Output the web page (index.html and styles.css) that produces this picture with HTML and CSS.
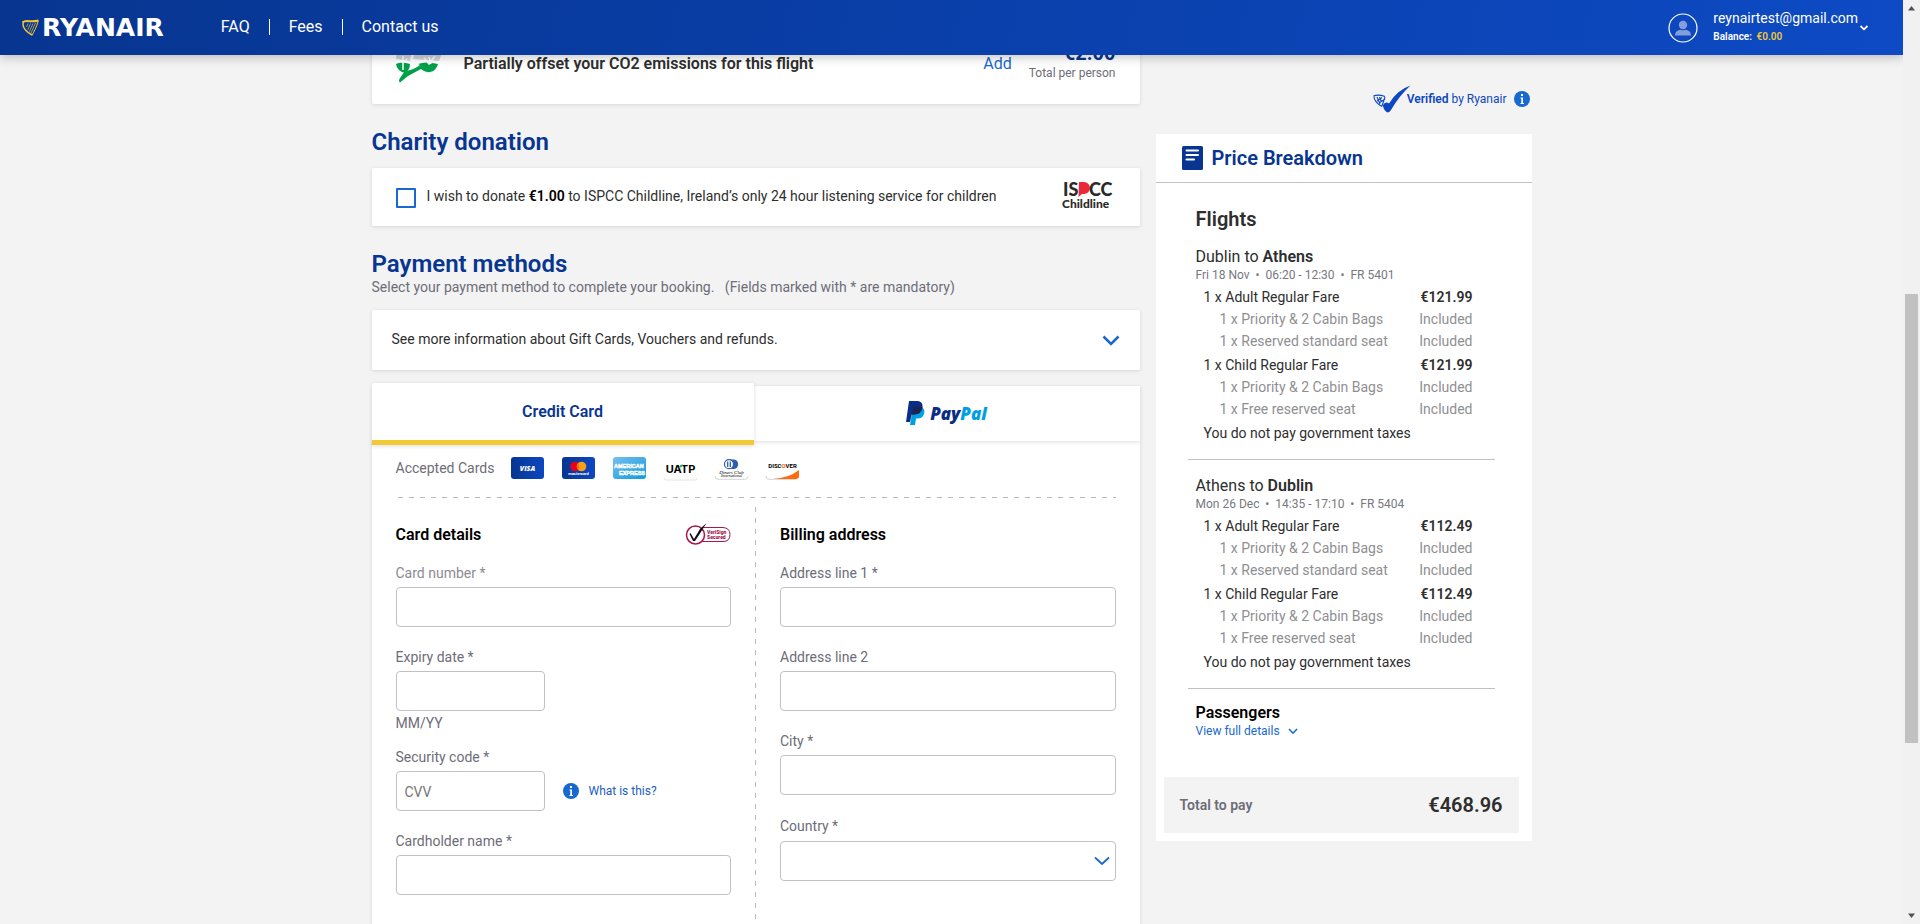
FILE: index.html
```html
<!DOCTYPE html>
<html lang="en">
<head>
<meta charset="utf-8">
<title>Ryanair – Payment</title>
<link rel="stylesheet" href="styles.css">
</head>
<body>
<div class="page">
  <header class="topbar">
    <a class="logo" href="#" aria-label="Ryanair">
      <svg class="logo-harp" viewBox="0 0 18 18" fill="none" stroke="#f1c933"><path d="M0.5 3.5C4 0 8 4 16.5 1.5" stroke-width="2"/><path d="M1.500 3C0 7 3 12 10 16" stroke-width="1.500"/><path d="M16 2C15 8 12 12 10 16.500" stroke-width="1"/><path d="M6 4.500L4.500 8M8.500 4.500L6 10.500M11 4.500L7.500 12.500M13.500 4L9 14" stroke-width=".7"/></svg>
      <span>RYANAIR</span>
    </a>
    <nav class="nav">
      <a href="#">FAQ</a><a href="#">Fees</a><a href="#">Contact us</a>
    </nav>
    <button class="account" type="button">
      <svg class="avatar" viewBox="0 0 30 30"><circle cx="15" cy="15" r="14" fill="none" stroke="#fff" stroke-width="1.200"/><circle cx="15" cy="12" r="4.200" fill="#859edb"/><path d="M7 22.500C7 18.500 10 17 12.500 16.700Q15 18 17.500 16.700C20 17 23 18.500 23 22.500Z" fill="#859edb"/></svg>
      <span class="account-text">
        <span class="email">reynairtest@gmail.com</span>
        <span class="balance">Balance: <b>€0.00</b></span>
      </span>
      <svg class="account-chev" viewBox="0 0 10 6"><path d="M1.500 1L5 4.300L8.500 1" fill="none" stroke="#fff" stroke-width="1.800"/></svg>
    </button>
  </header>

  <div class="layout">
    <main class="content">
      <section class="card offset">
        <svg class="leaf" viewBox="0 0 46 44"><path d="M0 20Q1 2 14 0Q17 10 14 22Z" fill="#d3d5d8"/><path d="M17 20Q20 2 32 0Q45 6 46 14L43 22Z" fill="#d3d5d8"/><path d="M0 25Q5 22 14 25Q14 31 9 34Q1 32 0 25Z" fill="#00a04a"/><path d="M22 25Q30 22 42 25Q40 32 34 33Q29 34 25 30L12 37L4 43.500Q2 42 4 39L9 32Q18 31 24 26Z" fill="#00a04a"/><path d="M7 17V31M7 24L3 21M7 24L11 20M28 19L33 25L39 17M33 18L35 25" stroke="#fff" stroke-width="1.500" fill="none"/></svg>
        <h3 class="offset-title">Partially offset your CO2 emissions for this flight</h3>
        <button class="add" type="button">Add</button>
        <div class="offset-price"><b>€2.00</b><span>Total per person</span></div>
      </section>

      <h2>Charity donation</h2>
      <section class="card charity">
        <input type="checkbox" id="donate">
        <label for="donate">I wish to donate <b>€1.00</b> to ISPCC Childline, Ireland’s only 24 hour listening service for children</label>
        <svg class="ispcc" viewBox="0 0 52 40" role="img" aria-label="ISPCC Childline"><path d="M17 5H22A5.500 5.500 0 0 1 22 17H20L16.500 20Z" fill="#ea2839"/><g class="ispcc-text"><text x="1" y="19" font-size="18">IS</text><text x="27" y="19" font-size="18">CC</text><text x="0" y="31" font-size="12">Childline</text></g></svg>
      </section>

      <h2>Payment methods</h2>
      <p class="hint">Select your payment method to complete your booking. &nbsp; (Fields marked with * are mandatory)</p>
      <button class="card vouchers" type="button">
        <span>See more information about Gift Cards, Vouchers and refunds.</span>
        <svg class="chev-lg" viewBox="0 0 18 12"><path d="M1.500 1.500L9 9L16.500 1.500" fill="none" stroke="#1769cf" stroke-width="2.500"/></svg>
      </button>

      <div class="tabs">
        <button class="tab tab-active" type="button">Credit Card</button>
        <button class="tab tab-paypal" type="button" aria-label="PayPal">
          <svg class="pp-mark" viewBox="0 0 20 24"><path d="M7 6H15.500Q19.500 8 18 13Q16.500 17.500 11.500 17.500H10L9 24H4Z" fill="#009ee3"/><path d="M3 0H11.500Q17 .5 16.500 6Q15.500 13.500 8 13.500H5.700L4 21H0Z" fill="#0b2d86"/><path d="M7.500 6H16.500Q15.500 13.500 8 13.500H6Z" fill="#1c2450"/></svg>
          <span class="pp-text">Pay<i>Pal</i></span>
        </button>
      </div>

      <section class="panel">
        <div class="accepted">
          <span>Accepted Cards</span>
          <div class="brands">
            <svg viewBox="0 0 35 24"><defs><linearGradient id="bl"><stop stop-color="#073590"/><stop offset="1" stop-color="#0d47c1"/></linearGradient></defs><rect x="1" y="1" width="33" height="22" rx="3" fill="url(#bl)"/><text x="17.500" y="14.500" text-anchor="middle" class="b-italic" font-size="7" fill="#fff">VISA</text></svg>
            <svg viewBox="0 0 35 24"><rect x="1" y="1" width="33" height="22" rx="3" fill="url(#bl)"/><circle cx="14" cy="10.500" r="4.800" fill="#eb001b"/><circle cx="20.500" cy="10.500" r="4.800" fill="#f79e1b"/><path d="M17.250 7Q19 10.500 17.250 14Q15.500 10.500 17.250 7Z" fill="#ff5f00"/><text x="17.500" y="19" text-anchor="middle" class="b-bold" font-size="4" fill="#fff">mastercard</text></svg>
            <svg viewBox="0 0 35 24"><defs><linearGradient id="am" x2="1" y2="1"><stop stop-color="#77bfec"/><stop offset="1" stop-color="#0f9bdb"/></linearGradient></defs><rect x="1" y="1" width="33" height="22" rx="3" fill="url(#am)"/><text x="2" y="12" class="b-amex" font-size="5.500">AMERICAN</text><text x="7" y="19" class="b-amex" font-size="5.500">EXPRESS</text></svg>
            <svg viewBox="0 0 35 24"><path d="M1 22Q1 24 3 24H32Q34 24 34 22" fill="none" stroke="#dcdcdc" stroke-width=".8"/><text x="17.500" y="17" text-anchor="middle" class="b-wide" font-size="11">UATP</text><path d="M16 12L20 9L17.500 9.500Z" fill="#19b251" stroke="#19b251"/></svg>
            <svg viewBox="0 0 35 24"><path d="M1 20Q1 23.300 4 23.300H31Q34 23.300 34 20" fill="none" stroke="#d5d5d5"/><path d="M16 3.500H20A4.800 4.800 0 0 1 20 13H16Z" fill="#2c5fae"/><circle cx="15" cy="8.200" r="4.500" fill="#fff" stroke="#2c5fae" stroke-width="1.200"/><path d="M13.700 5.500V11M16.300 5.500V11" stroke="#2c5fae" stroke-width="1.300"/><text x="17.500" y="17.500" text-anchor="middle" class="b-serif" font-size="5">Diners Club</text><text x="17.500" y="20.500" text-anchor="middle" class="b-serif" font-size="4">International</text></svg>
            <svg viewBox="0 0 35 24"><path d="M1 20Q1 23.300 4 23.300H31" fill="none" stroke="#d5d5d5"/><path d="M34 14V20Q34 23 31 23H8Q24 22 34 14Z" fill="#ff6b0b"/><text x="17.500" y="12" text-anchor="middle" class="b-bold" font-size="6">DISC<tspan fill="#ff6b0b">O</tspan>VER</text></svg>
          </div>
        </div>
        <div class="dash-h"></div>
        <form class="columns">
          <div class="col">
            <div class="col-head"><h3>Card details</h3>
              <svg class="verisign" viewBox="0 0 46 24" role="img" aria-label="VeriSign Secured"><path d="M17 5.500H38Q45 6 45 12.500Q45 19.500 38 19.500H17" fill="none" stroke="#a5174d"/><circle cx="10.500" cy="13" r="9" fill="#fff" stroke="#a5174d" stroke-width="1.500"/><path d="M5.500 11L9 17L15 7L21.500 1L14 13L10 19H8L4.500 12Z" fill="#111"/><text x="22" y="12" class="v-text" font-size="5">VeriSign</text><text x="22" y="16.500" class="v-text" font-size="5">Secured</text></svg>
            </div>
            <div class="field"><label class="pale" for="num">Card number *</label><input id="num" type="text"></div>
            <div class="field field-exp"><label for="exp">Expiry date *</label><input class="short" id="exp" type="text"><span class="format">MM/YY</span></div>
            <div class="field"><label for="cvv">Security code *</label>
              <div class="cvv-row"><input class="short" id="cvv" type="text" placeholder="CVV"><a class="what" href="#"><svg class="info" viewBox="0 0 16 16"><circle cx="8" cy="8" r="8" fill="#1769cf"/><path d="M7 3H9V5H7ZM6.500 6.500H9V12H10V13H6.500V12H7.300V7.500H6.500Z" fill="#fff"/></svg>What is this?</a></div>
            </div>
            <div class="field"><label for="name">Cardholder name *</label><input id="name" type="text"></div>
          </div>
          <div class="dash-v"></div>
          <div class="col">
            <div class="col-head"><h3>Billing address</h3></div>
            <div class="field"><label for="a1">Address line 1 *</label><input id="a1" type="text"></div>
            <div class="field"><label for="a2">Address line 2</label><input id="a2" type="text"></div>
            <div class="field"><label for="city">City *</label><input id="city" type="text"></div>
            <div class="field field-select"><label for="country">Country *</label>
              <div class="select-wrap"><select id="country"><option></option></select><svg class="select-chev" viewBox="0 0 16 10"><path d="M1 1.500L8 8L15 1.500" fill="none" stroke="#1769cf" stroke-width="1.800"/></svg></div>
            </div>
          </div>
        </form>
      </section>
    </main>

    <aside class="side">
      <div class="verified">
        <svg class="tick" viewBox="0 0 38 28"><path d="M10 20Q13 16 16 18.500Q24 5 37.500 0.500Q26 11 18 25Q16 28.500 13.500 27Q10 24 10 20Z" fill="#0d47c1"/><path d="M0.500 11Q5 9 12 11.500M1 11.500Q1 17 9 21.500M12 12L9 21M4 12L7 19M6.500 12L8.500 17M9 12.500L4 16M12 14L6 18" fill="none" stroke="#0d47c1" stroke-width="1.100"/></svg>
        <span><b>Verified</b> by Ryanair</span>
        <svg class="info" viewBox="0 0 16 16"><circle cx="8" cy="8" r="8" fill="#1769cf"/><path d="M7 3H9V5H7ZM6.500 6.500H9V12H10V13H6.500V12H7.300V7.500H6.500Z" fill="#fff"/></svg>
      </div>
      <section class="breakdown">
        <div class="bd-head">
          <svg class="doc" viewBox="0 0 21 24"><rect width="21" height="24" rx="1.500" fill="#073590"/><path d="M4.500 4.500H16M4.500 9H16M4.500 13.500H12" stroke="#fff" stroke-width="2" stroke-linecap="round"/></svg>
          <h2>Price Breakdown</h2>
        </div>
        <div class="bd-body">
          <h2 class="flights">Flights</h2>
          <section class="flight">
            <p class="route">Dublin to <b>Athens</b></p>
            <p class="meta">Fri 18 Nov &nbsp;•&nbsp; 06:20 - 12:30 &nbsp;•&nbsp; FR 5401</p>
            <table>
              <tr class="fare"><td>1 x Adult Regular Fare</td><td>€121.99</td></tr>
              <tr class="extra"><td>1 x Priority &amp; 2 Cabin Bags</td><td>Included</td></tr>
              <tr class="extra"><td>1 x Reserved standard seat</td><td>Included</td></tr>
              <tr class="fare"><td>1 x Child Regular Fare</td><td>€121.99</td></tr>
              <tr class="extra"><td>1 x Priority &amp; 2 Cabin Bags</td><td>Included</td></tr>
              <tr class="extra"><td>1 x Free reserved seat</td><td>Included</td></tr>
            </table>
            <p class="taxes">You do not pay government taxes</p>
          </section>
          <section class="flight">
            <p class="route">Athens to <b>Dublin</b></p>
            <p class="meta">Mon 26 Dec &nbsp;•&nbsp; 14:35 - 17:10 &nbsp;•&nbsp; FR 5404</p>
            <table>
              <tr class="fare"><td>1 x Adult Regular Fare</td><td>€112.49</td></tr>
              <tr class="extra"><td>1 x Priority &amp; 2 Cabin Bags</td><td>Included</td></tr>
              <tr class="extra"><td>1 x Reserved standard seat</td><td>Included</td></tr>
              <tr class="fare"><td>1 x Child Regular Fare</td><td>€112.49</td></tr>
              <tr class="extra"><td>1 x Priority &amp; 2 Cabin Bags</td><td>Included</td></tr>
              <tr class="extra"><td>1 x Free reserved seat</td><td>Included</td></tr>
            </table>
            <p class="taxes">You do not pay government taxes</p>
          </section>
          <div class="passengers">
            <h3>Passengers</h3>
            <a href="#">View full details<svg class="chev-sm" viewBox="0 0 10 7"><path d="M1 1L5 5.200L9 1" fill="none" stroke="#1769cf" stroke-width="1.600"/></svg></a>
          </div>
        </div>
        <div class="total"><span>Total to pay</span><b>€468.96</b></div>
      </section>
    </aside>
  </div>
</div>
<div class="scrollbar" aria-hidden="true">
  <svg viewBox="0 0 17 17"><path d="M8.500 6L12 10.500H5Z" fill="#505050"/></svg>
  <div class="track"><div class="thumb"></div></div>
  <svg viewBox="0 0 17 17"><path d="M8.500 11L12 6.500H5Z" fill="#505050"/></svg>
</div>
</body>
</html>
```
FILE: styles.css
```css
* { box-sizing: border-box; }
body { margin: 0; height: 100vh; display: flex; overflow: hidden; background: #f3f3f3; color: #2e2e2e; font: 400 14px/20px Roboto, "Liberation Sans", sans-serif; }
h2, h3, p { margin: 0; }
a { color: #1769cf; text-decoration: none; }
b { font-weight: 600; }
button { font: inherit; border: 0; background: none; padding: 0; cursor: pointer; color: inherit; }
svg { display: block; flex: none; }
.page { flex: 1; min-width: 0; overflow: hidden; }

.topbar { position: relative; z-index: 2; height: 55px; display: flex; align-items: center; padding: 0 34px 0 22px; background: linear-gradient(103deg, #073590, #0d4ac4); box-shadow: 0 2px 10px rgba(0, 0, 0, .25); color: #fff; }
.logo { display: flex; align-items: center; gap: 2px; color: #fff; font: 700 25px/24px "DejaVu Sans", sans-serif; }
.logo-harp { width: 18px; height: 18px; }
.nav { display: flex; margin-left: 38px; padding-bottom: 2px; }
.nav a { color: #fff; font-size: 16px; line-height: 16px; padding: 0 19px; }
.nav a + a { border-left: 1px solid #fff; }
.account { margin-left: auto; display: flex; align-items: center; gap: 15px; text-align: left; color: #fff; }
.avatar { width: 30px; height: 30px; }
.account-text { display: flex; flex-direction: column; padding-bottom: 2px; }
.email { font-size: 14px; line-height: 20px; }
.balance { font-size: 10px; line-height: 18px; font-weight: 600; }
.balance b { color: #f1c933; margin-left: 2px; }
.account-chev { width: 10px; height: 6px; margin-left: -14px; }

.layout { display: flex; align-items: flex-start; justify-content: center; gap: 16px; }
.content { width: 768px; }
.side { width: 376px; }
.card, .breakdown { background: #fff; }
.card { border-radius: 2px; box-shadow: 0 1px 4px rgba(0, 0, 0, .12); display: flex; align-items: center; }
h2 { color: #073590; font-size: 24px; line-height: 30px; font-weight: 600; }
h3 { color: #000; font-size: 16px; line-height: 20px; font-weight: 600; }
.content > h2 { margin-top: 23px; }

.offset { margin-top: -37px; height: 86px; padding: 0 24px; }
.leaf { width: 46px; height: 44px; }
.offset .offset-title { flex: 1; margin-left: 22px; padding-top: 5px; color: #2e2e2e; }
.add { color: #1769cf; font-size: 16px; padding-top: 5px; margin-right: 17px; }
.offset-price { display: flex; flex-direction: column; align-items: flex-end; }
.offset-price b { color: #073590; font-size: 20px; line-height: 24px; font-weight: 700; }
.offset-price span { font-size: 12px; line-height: 16px; color: #6d6d78; }

.charity { margin-top: 11px; height: 58px; padding: 0 26px 0 24px; }
.charity input { appearance: none; width: 20px; height: 20px; margin: 2px 11px 0 0; border: 2px solid #1769cf; border-radius: 1px; background: #fff; }
.charity label { flex: 1; padding-bottom: 2px; }
.charity b { color: #000; }
.ispcc { width: 52px; height: 40px; }
.ispcc-text { font-family: Lato, sans-serif; font-weight: 900; fill: #2c2a29; }

.hint { color: #6d6d78; line-height: 16px; margin-bottom: 15px; }
.vouchers { width: 100%; height: 60px; padding: 0 20px 2px; justify-content: space-between; }
.chev-lg { width: 18px; height: 12px; margin-top: 3px; }

.tabs { display: grid; grid-template-columns: 382fr 386fr; align-items: start; margin-top: 13px; }
.tab { background: #fff; box-shadow: 0 1px 4px rgba(0, 0, 0, .14); }
.tab-active { position: relative; height: 62px; margin-bottom: -4px; padding-top: 1px; border-bottom: 5px solid #f1c933; border-radius: 2px 2px 0 0; color: #073590; font-size: 16px; font-weight: 600; }
.tab-paypal { height: 55px; margin-top: 3px; display: flex; align-items: center; justify-content: center; gap: 4px; padding-bottom: 2px; }
.pp-mark { width: 20px; height: 24px; }
.pp-text { font: italic 800 17px/20px "Open Sans", sans-serif; color: #0b2d86; padding-top: 3px; }
.pp-text i { color: #009ee3; }

.panel { background: #fff; padding: 16px 24px 40px; box-shadow: 0 1px 4px rgba(0, 0, 0, .12); }
.accepted { display: flex; align-items: center; height: 22px; color: #6d6d78; }
.brands { display: flex; gap: 16px; margin-left: 16px; }
.brands svg { width: 35px; height: 24px; overflow: visible; }
.b-bold { font-family: Roboto, sans-serif; font-weight: 700; }
.b-italic { font-family: "Open Sans", sans-serif; font-weight: 800; font-style: italic; }
.b-amex { font-family: "Liberation Sans", sans-serif; font-weight: 700; fill: none; stroke: #fff; stroke-width: .6px; }
.b-wide { font-family: Inter, sans-serif; font-weight: 700; }
.b-serif { font-family: "Liberation Serif", serif; font-style: italic; }
.dash-h { height: 1px; margin: 18px 0 0 2px; background: repeating-linear-gradient(90deg, #b9babd 0 5px, transparent 5px 11px); }
.dash-v { width: 1px; margin-top: 9px; height: 412px; background: repeating-linear-gradient(180deg, #b9babd 0 5px, transparent 5px 11px); }
.columns { display: grid; grid-template-columns: 1fr 1px 1fr; column-gap: 24px; }
.col { padding-top: 27px; }
.col-head { display: flex; justify-content: space-between; align-items: center; height: 20px; margin-bottom: 18px; }
.verisign { width: 46px; height: 24px; margin-bottom: 2px; }
.v-text { font-family: Roboto, sans-serif; font-weight: 900; fill: #a5174d; }
.field { display: flex; flex-direction: column; margin-bottom: 20px; color: #6d6d78; }
.field label { margin-bottom: 4px; }
.field .pale { color: #8b8b94; }
.field-exp { margin-bottom: 14px; }
.field-select label { padding-top: 1px; margin-bottom: 5px; }
.field input, .field select { width: 100%; height: 40px; padding: 0 8px; border: 1px solid #c0c0c6; border-radius: 4px; background: #fff; font: inherit; appearance: none; }
.field input.short { width: 149px; padding-top: 2px; }
.field input::placeholder { color: #757575; opacity: 1; }
.format { padding-top: 2px; }
.cvv-row { display: flex; align-items: center; gap: 18px; }
.what { display: flex; align-items: center; gap: 10px; font-size: 12px; color: #2160c4; }
.info { width: 16px; height: 16px; }
.select-wrap { display: grid; align-items: center; }
.select-wrap > * { grid-area: 1 / 1; }
.select-chev { width: 16px; height: 10px; justify-self: end; margin-right: 6px; pointer-events: none; }

.verified { display: flex; align-items: center; justify-content: flex-end; height: 28px; margin: 30px 2px 21px 0; font-size: 12px; line-height: 16px; color: #0d47c1; }
.verified .tick { width: 38px; height: 28px; margin-right: -4px; }
.verified .info { margin-left: 7px; }
.bd-head { display: flex; align-items: center; gap: 9px; height: 49px; padding-left: 26px; border-bottom: 1px solid #c0c0c6; }
.doc { width: 21px; height: 24px; }
.bd-head h2, .flights { font-size: 20px; line-height: 24px; }
.bd-body { padding: 24px 37px 38px 32px; }
.flights { color: #2e2e2e; padding-left: 8px; }
.flight { padding: 16px 22px 14px 8px; border-bottom: 1px solid #c0c0c6; }
.route { font-size: 16px; line-height: 20px; }
.meta { font-size: 12px; line-height: 16px; color: #77777f; margin-bottom: 2px; }
table { width: 100%; border-collapse: collapse; }
td { padding: 0 0 0 8px; line-height: 24px; }
td:last-child { text-align: right; font-weight: 600; padding: 0; }
.extra td, .extra td:last-child { line-height: 20px; padding-bottom: 2px; color: #8f8f92; font-weight: 400; }
.extra td:first-child { padding-left: 24px; }
.taxes { padding-left: 8px; line-height: 24px; }
.passengers { padding: 14px 0 0 8px; }
.passengers a { display: flex; align-items: center; gap: 8px; font-size: 12px; line-height: 16px; }
.chev-sm { width: 10px; height: 7px; }
.total { display: flex; align-items: center; justify-content: space-between; height: 56px; margin: 0 13px 0 8px; padding: 0 16px; background: #f3f3f3; }
.total span { color: #6d6d78; font-weight: 600; }
.total b { font-size: 20px; }
.breakdown { padding-bottom: 8px; }

.scrollbar { width: 17px; flex: none; background: #f1f1f1; display: flex; flex-direction: column; }
.scrollbar svg { width: 17px; height: 17px; }
.track { flex: 1; padding: 277px 2px 0; }
.thumb { height: 449px; background: #c1c1c1; }
```
